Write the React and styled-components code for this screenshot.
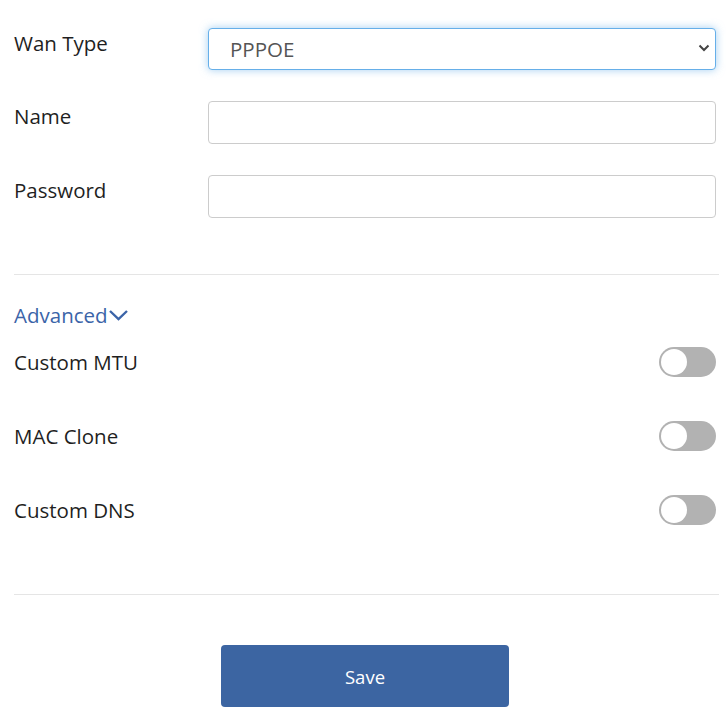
import React, { useState } from "react";
import styled, { createGlobalStyle } from "styled-components";

const Global = createGlobalStyle`
  html, body { margin: 0; padding: 0; background: #fff; }
  body { font-family: "Open Sans", "Noto Sans", sans-serif; color: #222; }
  * { box-sizing: border-box; }
`;

const Page = styled.div`
  width: 719px;
  padding: 28px 0 0 14px;
`;

const Form = styled.div`
  display: flex;
  flex-direction: column;
  gap: 31px;
  padding-right: 3px;
`;

const FieldRow = styled.div`
  display: grid;
  grid-template-columns: 194px 1fr;
  align-items: start;
`;

const Label = styled.label`
  font-size: 20.5px;
  line-height: 30px;
  color: #1f1f1f;
`;

const SelectWrap = styled.div`
  position: relative;
`;

const Select = styled.select`
  appearance: none;
  width: 100%;
  height: 42px;
  border: 1px solid #66afe9;
  border-radius: 4px;
  box-shadow: 0 0 8px rgba(102, 175, 233, 0.6);
  background: #fff;
  font-family: "Open Sans", "Noto Sans", sans-serif;
  font-size: 20.5px;
  color: #555;
  padding: 0 0 0 21px;
  outline: none;
`;

const Caret = styled.svg`
  position: absolute;
  right: 6px;
  top: 16px;
  pointer-events: none;
`;

const Input = styled.input`
  width: 100%;
  height: 43px;
  border: 1px solid #ccc;
  border-radius: 4px;
  background: #fff;
  font-family: "Open Sans", "Noto Sans", sans-serif;
  font-size: 20px;
  padding: 0 12px;
  outline: none;
`;

const Divider = styled.hr`
  border: 0;
  height: 1px;
  background: #e5e5e5;
  margin: ${(p) => p.$top}px 0 0 0;
`;

const Advanced = styled.div`
  display: flex;
  align-items: center;
  margin-top: 25px;
  font-size: 20.5px;
  line-height: 30px;
  color: #3b64a8;
  cursor: pointer;
`;

const ToggleList = styled.div`
  display: flex;
  flex-direction: column;
  gap: 44px;
  margin-top: 17px;
  padding-right: 3px;
`;

const ToggleRow = styled.div`
  display: flex;
  align-items: center;
  justify-content: space-between;
  height: 30px;
`;

const ToggleLabel = styled.span`
  font-size: 20.5px;
  line-height: 30px;
  color: #1f1f1f;
`;

const Switch = styled.button`
  position: relative;
  width: 57px;
  height: 30px;
  border: 0;
  padding: 0;
  border-radius: 15px;
  background: ${(p) => (p.$on ? "#3c65a2" : "#b2b2b2")};
  cursor: pointer;
`;

const Knob = styled.span`
  position: absolute;
  top: 2px;
  left: ${(p) => (p.$on ? "29px" : "2px")};
  width: 26px;
  height: 26px;
  border-radius: 50%;
  background: #fff;
`;

const ButtonBar = styled.div`
  display: flex;
  justify-content: center;
  margin-top: 50px;
  padding-right: 3px;
`;

const SaveButton = styled.button`
  width: 288px;
  height: 62px;
  border: 0;
  border-radius: 4px;
  background: #3c65a2;
  color: #fff;
  font-family: "Open Sans", "Noto Sans", sans-serif;
  font-size: 18.5px;
  cursor: pointer;
`;

function Toggle({ label }) {
  const [on, setOn] = useState(false);
  return (
    <ToggleRow>
      <ToggleLabel>{label}</ToggleLabel>
      <Switch $on={on} onClick={() => setOn(!on)}>
        <Knob $on={on} />
      </Switch>
    </ToggleRow>
  );
}

export default function App() {
  return (
    <Page>
      <Global />
      <Form>
        <FieldRow>
          <Label>Wan Type</Label>
          <SelectWrap>
            <Select defaultValue="PPPOE">
              <option>PPPOE</option>
              <option>DHCP</option>
              <option>Static IP</option>
            </Select>
            <Caret width="12" height="8" viewBox="0 0 12 8">
              <path d="M1.5 1.5 L6 6 L10.5 1.5" fill="none" stroke="#444" strokeWidth="2" />
            </Caret>
          </SelectWrap>
        </FieldRow>
        <FieldRow>
          <Label>Name</Label>
          <Input type="text" />
        </FieldRow>
        <FieldRow>
          <Label>Password</Label>
          <Input type="password" />
        </FieldRow>
      </Form>
      <Divider $top={56} />
      <Advanced>
        Advanced
        <svg width="21" height="14" viewBox="0 0 21 14">
          <path d="M2 3 L10.5 11 L19 3" fill="none" stroke="#3b64a8" strokeWidth="2.4" />
        </svg>
      </Advanced>
      <ToggleList>
        <Toggle label="Custom MTU" />
        <Toggle label="MAC Clone" />
        <Toggle label="Custom DNS" />
      </ToggleList>
      <Divider $top={69} />
      <ButtonBar>
        <SaveButton>Save</SaveButton>
      </ButtonBar>
    </Page>
  );
}
